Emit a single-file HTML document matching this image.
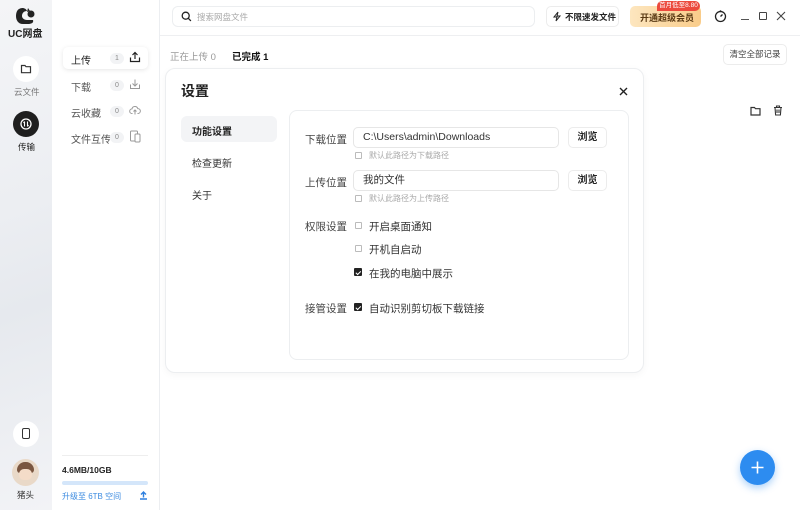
<!DOCTYPE html>
<html><head><meta charset="utf-8"><style>
*{box-sizing:border-box;margin:0;padding:0}
body{width:800px;height:510px;overflow:hidden;position:relative;background:#fff;font-family:"Liberation Sans","Noto Sans CJK SC",sans-serif;color:#222;font-size:11px}
.a{position:absolute}
.rail{left:0;top:0;width:52px;height:510px;background:linear-gradient(160deg,#f4f5f7 0%,#eceef2 40%,#e6e9ee 60%,#f2f3f6 100%)}
.side{left:52px;top:0;width:108px;height:510px;background:#fff;border-right:1px solid #eceef1}
.circ{border-radius:50%;background:#fff}
.btn{border:1px solid #ececec;border-radius:5px;background:#fff;text-align:center}
.inp{border:1px solid #e6e6e6;border-radius:5px;height:21px;line-height:19px;padding-left:9px;font-size:10.5px;color:#333}
.cb{width:7px;height:7px;border:1px solid #bbb;border-radius:1px}
.cbk{width:8px;height:8px;background:#222;border-radius:1px}
.cbk:after{content:"";position:absolute;left:2.5px;top:1.5px;width:2px;height:3.5px;border:solid #fff;border-width:0 1px 1px 0;transform:rotate(45deg)}
.lbl{font-size:10.5px;color:#444}
.hint{font-size:8px;color:#aaa}
.si{font-size:10px;color:#555}
.badge{font-size:7px;color:#888;background:#f2f3f5;border-radius:6px;width:14px;height:11px;line-height:11px;text-align:center}
</style></head><body>
<div class="a rail"></div>
<svg class="a" style="left:16px;top:7px" width="20" height="17" viewBox="0 0 20 17"><path d="M3 2c3-2 7-1 8 2-3 0-5 2-5 5 0 2 2 4 5 4h6c1 3-2 4-5 4H7C2 17 0 13 0 9 0 6 1 3 3 2z" fill="#222"/><circle cx="15" cy="7" r="3.5" fill="#222"/><path d="M11 5l1-4 2 3z" fill="#222"/></svg>
<div class="a" style="left:8px;top:25px;font-size:10px;font-weight:bold;color:#222">UC网盘</div>
<div class="a circ" style="left:13px;top:56px;width:26px;height:26px"></div>
<svg class="a" style="left:20px;top:63px" width="12" height="12" viewBox="0 0 12 12"><path d="M1.5 2.5h3.5l1 1.2h4.5v6H1.5z" fill="none" stroke="#333" stroke-width="1.2"/></svg>
<div class="a" style="left:14px;top:86px;font-size:8.5px;color:#777">云文件</div>
<div class="a circ" style="left:13px;top:111px;width:26px;height:26px;background:#1f1f1f"></div>
<svg class="a" style="left:19px;top:117px" width="14" height="14" viewBox="0 0 14 14"><circle cx="7" cy="7" r="5" fill="none" stroke="#fff" stroke-width="1.3"/><path d="M5.5 4.5v5M8.5 4.5v5M4.5 6l1-1.5M9.5 8l-1 1.5" stroke="#fff" stroke-width="1.1" fill="none"/></svg>
<div class="a" style="left:18px;top:141px;font-size:8.5px;color:#222">传输</div>
<div class="a circ" style="left:13px;top:421px;width:26px;height:26px"></div>
<div class="a" style="left:22px;top:428px;width:8px;height:11px;border:1.3px solid #333;border-radius:2px"></div>
<div class="a circ" style="left:12px;top:459px;width:27px;height:27px;background:#e9d9c8"></div>
<div class="a" style="left:17px;top:462px;width:17px;height:11px;border-radius:8px 8px 3px 3px;background:#7a5640"></div>
<div class="a" style="left:19px;top:469px;width:13px;height:11px;border-radius:5px;background:#f4dcc8"></div>
<div class="a" style="left:17px;top:489px;font-size:8.5px;color:#333">猪头</div>

<div class="a side"></div>
<div class="a" style="left:63px;top:47px;width:85px;height:22px;background:#fff;border-radius:5px;box-shadow:0 1px 5px rgba(0,0,0,.1)"></div>
<div class="a si" style="left:71px;top:52px;color:#222">上传</div>
<div class="a badge" style="left:110px;top:53px">1</div>
<svg class="a" style="left:129px;top:51px" width="12" height="12" viewBox="0 0 12 12"><path d="M6 8V1.5M3.5 4L6 1.5 8.5 4M1.5 6.5v4h9v-4" fill="none" stroke="#222" stroke-width="1.2"/></svg>
<div class="a si" style="left:71px;top:79px">下载</div>
<div class="a badge" style="left:110px;top:80px">0</div>
<svg class="a" style="left:129px;top:78px" width="12" height="12" viewBox="0 0 12 12"><path d="M6 1.5V8M3.5 5.5L6 8l2.5-2.5M1.5 6.5v4h9v-4" fill="none" stroke="#999" stroke-width="1"/></svg>
<div class="a si" style="left:71px;top:105px">云收藏</div>
<div class="a badge" style="left:110px;top:106px">0</div>
<svg class="a" style="left:129px;top:104px" width="12" height="12" viewBox="0 0 12 12"><path d="M3.5 9.5H3a2.3 2.3 0 010-4.6 3 3 0 015.8-.3A2.3 2.3 0 019 9.5h-.5M6 10.5V6M4.5 7.5L6 6l1.5 1.5" fill="none" stroke="#999" stroke-width="1"/></svg>
<div class="a si" style="left:71px;top:131px">文件互传</div>
<div class="a badge" style="left:110px;top:132px">0</div>
<svg class="a" style="left:129px;top:130px" width="12" height="13" viewBox="0 0 12 13"><rect x="1.5" y="1" width="7" height="10" rx="1" fill="none" stroke="#999"/><rect x="6" y="4" width="5" height="8" rx="1" fill="#fff" stroke="#999"/></svg>
<div class="a" style="left:62px;top:455px;width:86px;height:1px;background:#eee"></div>
<div class="a" style="left:62px;top:465px;font-size:8.5px;font-weight:bold;color:#222">4.6MB/10GB</div>
<div class="a" style="left:62px;top:481px;width:86px;height:4px;border-radius:2px;background:#d4e6fa"></div>
<div class="a" style="left:62px;top:491px;font-size:8px;color:#3c8be0">升级至 6TB 空间</div>
<svg class="a" style="left:139px;top:491px" width="9" height="9" viewBox="0 0 9 9"><path d="M4.5 6.5V1M2 3.5L4.5 1 7 3.5M1 8h7" fill="none" stroke="#2d7fdf" stroke-width="1.4"/></svg>

<div class="a" style="left:160px;top:35px;width:640px;height:1px;background:#eeeff1"></div>
<div class="a" style="left:172px;top:6px;width:363px;height:21px;border:1px solid #eceef0;border-radius:6px"></div>
<svg class="a" style="left:181px;top:11px" width="11" height="11" viewBox="0 0 11 11"><circle cx="4.7" cy="4.7" r="3.5" fill="none" stroke="#222" stroke-width="1.3"/><path d="M7.3 7.3l2.6 2.6" stroke="#222" stroke-width="1.3"/></svg>
<div class="a" style="left:197px;top:11px;font-size:8.5px;color:#aaa">搜索网盘文件</div>
<div class="a btn" style="left:546px;top:6px;width:73px;height:21px"></div>
<svg class="a" style="left:552px;top:11px" width="10" height="11" viewBox="0 0 10 11"><path d="M6 1L2 6h3l-1 4 4-5H5z" fill="none" stroke="#222" stroke-width="1"/></svg>
<div class="a" style="left:565px;top:11px;font-size:8.5px;color:#222;font-weight:bold">不限速发文件</div>
<div class="a" style="left:630px;top:6px;width:71px;height:21px;border-radius:5px;background:linear-gradient(90deg,#fde6bf,#f9cc8a)"></div>
<div class="a" style="left:640px;top:11px;font-size:9px;color:#5a3a14;font-weight:bold">开通超级会员</div>
<div class="a" style="left:657px;top:1px;width:43px;height:10px;border-radius:5px 5px 5px 0;background:#ec4a3d;color:#fff;font-size:6.5px;line-height:10px;text-align:center">首月低至8.80</div>
<svg class="a" style="left:714px;top:10px" width="13" height="13" viewBox="0 0 13 13"><circle cx="6.5" cy="6.5" r="5" fill="none" stroke="#222" stroke-width="1.3"/><path d="M6.5 6.5L8.5 4.5" stroke="#222" stroke-width="1.3"/><circle cx="6.5" cy="1.3" r="1" fill="#222"/></svg>
<div class="a" style="left:741px;top:19px;width:8px;height:1px;background:#555"></div>
<div class="a" style="left:759px;top:12px;width:8px;height:8px;border:1.2px solid #444;border-radius:1px"></div>
<svg class="a" style="left:776px;top:11px" width="10" height="10" viewBox="0 0 10 10"><path d="M1 1l8 8M9 1L1 9" stroke="#444" stroke-width="1.1"/></svg>

<div class="a" style="left:170px;top:49px;font-size:9.5px;color:#999">正在上传 0</div>
<div class="a" style="left:232px;top:49px;font-size:9.5px;color:#111;font-weight:bold">已完成 1</div>
<div class="a btn" style="left:723px;top:44px;width:64px;height:21px;font-size:8.5px;line-height:19px;color:#444">清空全部记录</div>
<svg class="a" style="left:750px;top:106px" width="11" height="10" viewBox="0 0 11 10"><path d="M1 1.5h3.5l1 1.2H10v6.3H1z" fill="none" stroke="#333" stroke-width="1.2"/></svg>
<svg class="a" style="left:773px;top:105px" width="10" height="11" viewBox="0 0 10 11"><path d="M1 2.5h8M3.5 2.5V1h3v1.5M2 2.5l.6 7.5h4.8L8 2.5M4 4.5v3.5M6 4.5v3.5" fill="none" stroke="#333" stroke-width="1.1"/></svg>

<div class="a" style="left:165px;top:68px;width:479px;height:305px;background:#fff;border:1px solid #eceef0;border-radius:10px;box-shadow:0 2px 8px rgba(0,0,0,.04)"></div>
<div class="a" style="left:181px;top:81px;font-size:14px;font-weight:bold;color:#222">设置</div>
<svg class="a" style="left:619px;top:87px" width="9" height="9" viewBox="0 0 9 9"><path d="M1 1l7 7M8 1L1 8" stroke="#222" stroke-width="1.4"/></svg>
<div class="a" style="left:181px;top:116px;width:96px;height:26px;background:#f3f4f6;border-radius:6px"></div>
<div class="a" style="left:192px;top:123px;font-size:10px;font-weight:bold;color:#222">功能设置</div>
<div class="a" style="left:192px;top:155px;font-size:10px;color:#333">检查更新</div>
<div class="a" style="left:192px;top:187px;font-size:10px;color:#333">关于</div>

<div class="a" style="left:289px;top:110px;width:340px;height:250px;border:1px solid #eceef0;border-radius:8px"></div>
<div class="a lbl" style="left:305px;top:132px">下载位置</div>
<div class="a inp" style="left:353px;top:127px;width:206px">C:\Users\admin\Downloads</div>
<div class="a btn" style="left:568px;top:127px;width:39px;height:21px;font-size:10px;line-height:19px;font-weight:bold">浏览</div>
<div class="a cb" style="left:355px;top:152px"></div>
<div class="a hint" style="left:369px;top:150px">默认此路径为下载路径</div>
<div class="a lbl" style="left:305px;top:175px">上传位置</div>
<div class="a inp" style="left:353px;top:170px;width:206px">我的文件</div>
<div class="a btn" style="left:568px;top:170px;width:39px;height:21px;font-size:10px;line-height:19px;font-weight:bold">浏览</div>
<div class="a cb" style="left:355px;top:195px"></div>
<div class="a hint" style="left:369px;top:193px">默认此路径为上传路径</div>
<div class="a lbl" style="left:305px;top:219px">权限设置</div>
<div class="a cb" style="left:355px;top:222px"></div>
<div class="a lbl" style="left:369px;top:219px;color:#333">开启桌面通知</div>
<div class="a cb" style="left:355px;top:245px"></div>
<div class="a lbl" style="left:369px;top:242px;color:#333">开机自启动</div>
<div class="a cbk" style="left:354px;top:268px"></div>
<div class="a lbl" style="left:369px;top:266px;color:#333">在我的电脑中展示</div>
<div class="a lbl" style="left:305px;top:301px">接管设置</div>
<div class="a cbk" style="left:354px;top:303px"></div>
<div class="a lbl" style="left:369px;top:301px;color:#333">自动识别剪切板下载链接</div>

<div class="a circ" style="left:740px;top:450px;width:35px;height:35px;background:#2d8cf0;box-shadow:0 3px 8px rgba(45,140,240,.4)"></div>
<svg class="a" style="left:750px;top:460px" width="15" height="15" viewBox="0 0 15 15"><path d="M7.5 1.5v12M1.5 7.5h12" stroke="#fff" stroke-width="1.6"/></svg>
</body></html>
